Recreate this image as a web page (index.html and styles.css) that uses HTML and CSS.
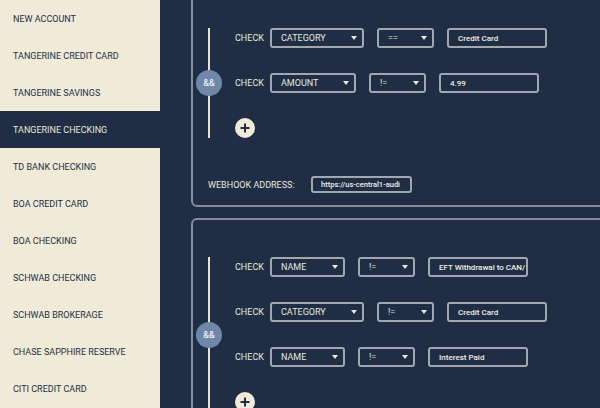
FILE: index.html
```html
<!DOCTYPE html>
<html>
<head>
<meta charset="utf-8">
<link rel="stylesheet" href="styles.css">
</head>
<body>
<div class="app">
  <nav class="sidebar">
    <div class="nav-item">NEW ACCOUNT</div>
    <div class="nav-item">TANGERINE CREDIT CARD</div>
    <div class="nav-item">TANGERINE SAVINGS</div>
    <div class="nav-item active">TANGERINE CHECKING</div>
    <div class="nav-item">TD BANK CHECKING</div>
    <div class="nav-item">BOA CREDIT CARD</div>
    <div class="nav-item">BOA CHECKING</div>
    <div class="nav-item">SCHWAB CHECKING</div>
    <div class="nav-item">SCHWAB BROKERAGE</div>
    <div class="nav-item">CHASE SAPPHIRE RESERVE</div>
    <div class="nav-item">CITI CREDIT CARD</div>
  </nav>
  <main class="main">
    <section class="panel">
      <div class="group">
        <div class="rail"><span class="and">&amp;&amp;</span></div>
        <div class="rows">
          <div class="row">
            <span class="check">CHECK</span>
            <div class="select w-category"><span>CATEGORY</span><svg class="caret" width="6" height="4" viewBox="0 0 6 4"><polygon points="0,0 6,0 3,4"/></svg></div>
            <div class="select w-op"><span>==</span><svg class="caret" width="6" height="4" viewBox="0 0 6 4"><polygon points="0,0 6,0 3,4"/></svg></div>
            <div class="field">Credit Card</div>
          </div>
          <div class="row">
            <span class="check">CHECK</span>
            <div class="select w-amount"><span>AMOUNT</span><svg class="caret" width="6" height="4" viewBox="0 0 6 4"><polygon points="0,0 6,0 3,4"/></svg></div>
            <div class="select w-op"><span>!=</span><svg class="caret" width="6" height="4" viewBox="0 0 6 4"><polygon points="0,0 6,0 3,4"/></svg></div>
            <div class="field">4.99</div>
          </div>
          <div class="add"><svg width="10" height="10" viewBox="0 0 10 10"><path d="M5 0.5V9.5M0.5 5H9.5" stroke="#1f2d45" stroke-width="2"/></svg></div>
        </div>
      </div>
      <div class="webhook">
        <span class="webhook-label">WEBHOOK ADDRESS:</span>
        <div class="field small">https://us-central1-audi</div>
      </div>
    </section>
    <section class="panel">
      <div class="group">
        <div class="rail"><span class="and">&amp;&amp;</span></div>
        <div class="rows">
          <div class="row">
            <span class="check">CHECK</span>
            <div class="select w-name"><span>NAME</span><svg class="caret" width="6" height="4" viewBox="0 0 6 4"><polygon points="0,0 6,0 3,4"/></svg></div>
            <div class="select w-op"><span>!=</span><svg class="caret" width="6" height="4" viewBox="0 0 6 4"><polygon points="0,0 6,0 3,4"/></svg></div>
            <div class="field">EFT Withdrawal to CAN/</div>
          </div>
          <div class="row">
            <span class="check">CHECK</span>
            <div class="select w-category"><span>CATEGORY</span><svg class="caret" width="6" height="4" viewBox="0 0 6 4"><polygon points="0,0 6,0 3,4"/></svg></div>
            <div class="select w-op"><span>!=</span><svg class="caret" width="6" height="4" viewBox="0 0 6 4"><polygon points="0,0 6,0 3,4"/></svg></div>
            <div class="field">Credit Card</div>
          </div>
          <div class="row">
            <span class="check">CHECK</span>
            <div class="select w-name"><span>NAME</span><svg class="caret" width="6" height="4" viewBox="0 0 6 4"><polygon points="0,0 6,0 3,4"/></svg></div>
            <div class="select w-op"><span>!=</span><svg class="caret" width="6" height="4" viewBox="0 0 6 4"><polygon points="0,0 6,0 3,4"/></svg></div>
            <div class="field">Interest Paid</div>
          </div>
          <div class="add"><svg width="10" height="10" viewBox="0 0 10 10"><path d="M5 0.5V9.5M0.5 5H9.5" stroke="#1f2d45" stroke-width="2"/></svg></div>
        </div>
      </div>
    </section>
  </main>
</div>
</body>
</html>
```

FILE: styles.css
```css
* { box-sizing: border-box; }

html, body {
  margin: 0;
  padding: 0;
  width: 600px;
  height: 408px;
  overflow: hidden;
  background: #1f2d45;
  font-family: Roboto, "Liberation Sans", Arial, sans-serif;
}

.app {
  display: flex;
  width: 600px;
  height: 408px;
  overflow: hidden;
}

.sidebar {
  width: 160px;
  flex: 0 0 160px;
  background: #f0ebd9;
  display: flex;
  flex-direction: column;
}

.nav-item {
  height: 37px;
  flex: 0 0 37px;
  display: flex;
  align-items: center;
  padding-left: 13px;
  font-size: 9px;
  color: #232f44;
  white-space: nowrap;
}

.nav-item.active {
  background: #1f2d45;
  color: #ece7d6;
}

.main {
  flex: 1;
  padding-left: 31px;
  margin-top: -11px;
  overflow: hidden;
}

.panel {
  width: 460px;
  border: 2px solid #868d98;
  border-radius: 6px;
  padding: 25px 0 12px 3px;
  margin-bottom: 11px;
}

.group {
  display: flex;
  align-items: stretch;
  padding: 12px 0 13px;
}

.rail {
  width: 26px;
  flex: 0 0 26px;
  display: flex;
  align-items: center;
  justify-content: center;
  background: linear-gradient(#e9e3cf, #e9e3cf) center / 2px 100% no-repeat;
}

.and {
  width: 26px;
  height: 26px;
  border-radius: 50%;
  background: #6f87a8;
  color: #eef0f3;
  font-size: 9px;
  font-weight: 500;
  display: flex;
  align-items: center;
  justify-content: center;
}

.rows {
  margin-left: 13px;
  display: flex;
  flex-direction: column;
  align-items: flex-start;
  gap: 25px;
}

.row {
  display: flex;
  align-items: center;
  height: 20px;
}

.check {
  width: 35px;
  font-size: 9px;
  color: #ece8dc;
  white-space: nowrap;
}

.select {
  height: 20px;
  border: 2px solid #a2a8b0;
  border-radius: 3px;
  display: flex;
  align-items: center;
  justify-content: space-between;
  padding: 0 5px 0 9px;
  margin-right: 13px;
  font-size: 9px;
  color: #ece8dc;
  white-space: nowrap;
}

.caret { fill: #ece8dc; display: block; }

.w-category { width: 94px; }
.w-amount { width: 86px; }
.w-name { width: 75px; }
.w-op { width: 57px; }

.field {
  width: 100px;
  height: 20px;
  border: 2px solid #a2a8b0;
  border-radius: 3px;
  padding: 0 2px 0 9px;
  display: flex;
  align-items: center;
  overflow: hidden;
  white-space: nowrap;
  font-size: 8px;
  font-weight: 500;
  color: #f2efe6;
}

.add {
  width: 20px;
  height: 20px;
  border-radius: 50%;
  background: #f0ebd9;
  display: flex;
  align-items: center;
  justify-content: center;
}

.add svg { display: block; }

.webhook {
  margin-top: 25px;
  margin-left: 12px;
  display: flex;
  align-items: center;
  height: 17px;
}

.webhook-label {
  font-size: 9px;
  color: #ece8dc;
  width: 103px;
  white-space: nowrap;
}

.field.small {
  width: 101px;
  height: 17px;
  padding-left: 8px;
  font-size: 7.5px;
}
```
